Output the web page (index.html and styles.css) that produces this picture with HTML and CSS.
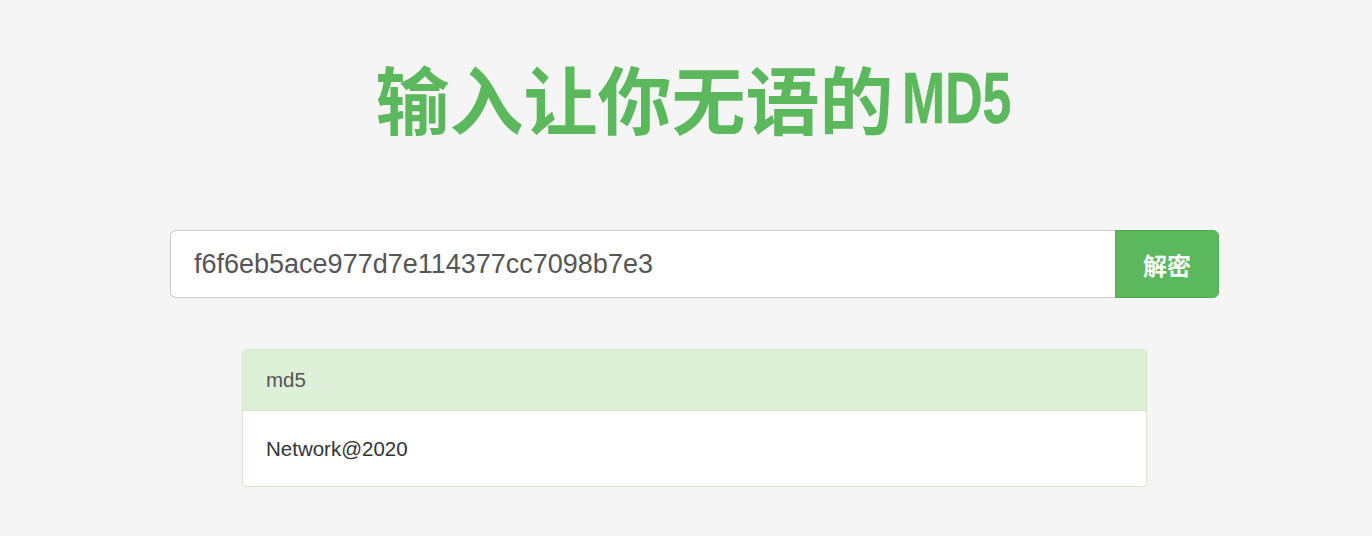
FILE: index.html
```html
<!DOCTYPE html>
<html lang="zh-CN">
<head>
<meta charset="utf-8">
<title>输入让你无语的MD5</title>
<link rel="stylesheet" href="styles.css">
</head>
<body>
<div class="page">
  <h1 class="title">输入让你无语的<span class="title-latin">MD5</span></h1>
  <form class="search">
    <input class="search-input" type="text" value="f6f6eb5ace977d7e114377cc7098b7e3">
    <button class="search-btn" type="button">解密</button>
  </form>
  <div class="panel">
    <div class="panel-head">md5</div>
    <div class="panel-body">Network@2020</div>
  </div>
</div>
</body>
</html>
```

FILE: styles.css
```css
html, body {
  margin: 0;
  padding: 0;
  background: #f5f5f5;
}
body {
  font-family: "Liberation Sans", Arial, "Noto Sans CJK SC", sans-serif;
  color: #333;
}
.page {
  display: flex;
  flex-direction: column;
  align-items: center;
  padding-left: 17px;
}
.title {
  margin: 49px 0 0;
  height: 96px;
  font-family: "Noto Sans CJK SC", sans-serif;
  font-weight: 700;
  font-size: 74px;
  line-height: 96px;
  color: #5cb85c;
  white-space: nowrap;
}
.title-latin {
  display: inline-block;
  width: 112px;
  margin-left: 8px;
  font-family: "Liberation Sans", Arial, sans-serif;
  font-weight: 700;
  font-size: 72px;
  transform: scaleX(0.72);
  transform-origin: left bottom;
  vertical-align: 6px;
  -webkit-text-stroke: 0.6px #5cb85c;
}
.search {
  margin: 85px 0 0;
  display: flex;
  width: 1049px;
  height: 68px;
}
.search-input {
  flex: 1;
  box-sizing: border-box;
  height: 68px;
  margin: 0;
  padding: 0 23px;
  border: 1px solid #ccc;
  border-right: 0;
  border-radius: 6px 0 0 6px;
  background: #fff;
  font-family: "Liberation Sans", Arial, sans-serif;
  font-size: 27px;
  color: #555;
  outline: none;
}
.search-btn {
  width: 104px;
  height: 68px;
  margin: 0;
  padding: 0;
  border: 1px solid #4cae4c;
  border-radius: 0 6px 6px 0;
  background: #5cb85c;
  color: #fff;
  font-family: "Noto Sans CJK SC", sans-serif;
  font-weight: 700;
  font-size: 24px;
}
.panel {
  margin-top: 51px;
  width: 905px;
  box-sizing: border-box;
  border: 1px solid #d6e9c6;
  border-radius: 4px;
  background: #fff;
  box-shadow: 0 1px 2px rgba(0,0,0,0.06);
}
.panel-head {
  height: 61px;
  box-sizing: border-box;
  padding: 0 23px;
  display: flex;
  align-items: center;
  background: #dff0d8;
  border-bottom: 1px solid #d6e9c6;
  border-radius: 3px 3px 0 0;
  color: #555;
  font-size: 20.5px;
}
.panel-body {
  height: 75px;
  box-sizing: border-box;
  padding: 0 23px;
  display: flex;
  align-items: center;
  font-size: 20.5px;
  color: #333;
}
```
